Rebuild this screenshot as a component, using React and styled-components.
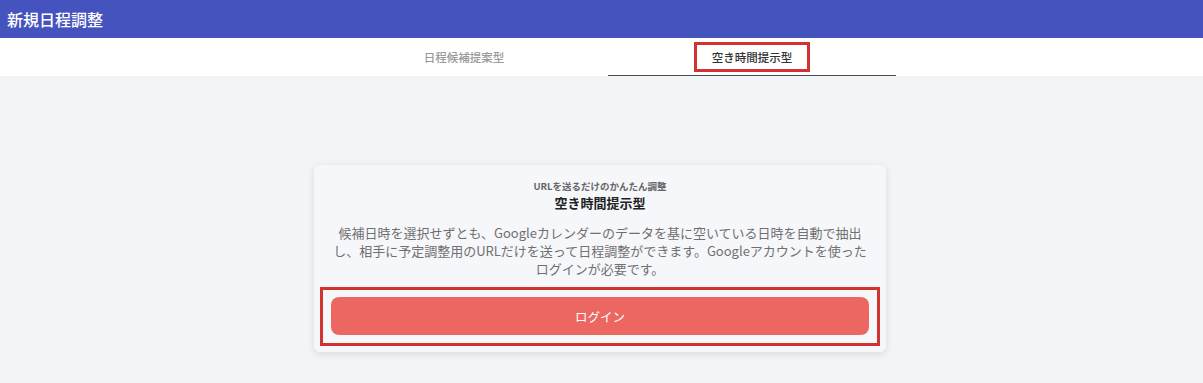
import React from 'react'
import styled, { createGlobalStyle } from 'styled-components'

const GlobalStyle = createGlobalStyle`
  html, body {
    margin: 0;
    padding: 0;
    background: #f3f4f8;
    font-family: "Noto Sans CJK JP", "Noto Sans", sans-serif;
  }
`

const Page = styled.div`
  min-height: 383px;
  background: #f3f4f8;
`

const Header = styled.header`
  height: 38px;
  background: #4553bf;
  display: flex;
  align-items: center;
  padding-left: 7px;
  box-sizing: border-box;
`

const HeaderTitle = styled.h1`
  margin: 0;
  color: #fff;
  font-size: 16px;
  font-weight: 500;
  line-height: 1;
`

const TabBar = styled.nav`
  height: 38px;
  background: #fff;
  display: flex;
  justify-content: center;
  padding-left: 13px;
`

const Tab = styled.div`
  width: 288px;
  display: flex;
  align-items: center;
  justify-content: center;
  box-sizing: border-box;
  border-bottom: 1px solid ${p => (p.$active ? '#4a4a4a' : 'transparent')};
  font-size: 11.5px;
  font-weight: 500;
  color: ${p => (p.$active ? '#333' : '#9a9a9a')};
`

const Marked = styled.span`
  display: inline-flex;
  align-items: center;
  justify-content: center;
  border: 3px solid #d13430;
  padding: ${p => p.$pad || '0'};
`

const Content = styled.main`
  padding-top: 89px;
  display: flex;
  justify-content: center;
  padding-right: 3px;
`

const Card = styled.section`
  width: 572px;
  box-sizing: border-box;
  background: #f6f7fa;
  border-radius: 6px;
  box-shadow: 0 2px 8px rgba(0, 0, 0, 0.1);
  padding: 14px 6px 6px;
  display: flex;
  flex-direction: column;
  align-items: center;
  text-align: center;
`

const Eyebrow = styled.div`
  font-size: 9.5px;
  font-weight: 700;
  color: #666;
  line-height: 14px;
`

const CardTitle = styled.h2`
  margin: 1px 0 0;
  font-size: 13px;
  font-weight: 700;
  color: #222;
  line-height: 18px;
`

const Description = styled.p`
  margin: 12px 0 0;
  max-width: 546px;
  font-size: 13px;
  line-height: 18px;
  color: #707070;
`

const ButtonBox = styled(Marked)`
  display: flex;
  align-self: stretch;
  margin-top: 9px;
  padding: 7px 8px 8px;
`

const Button = styled.button`
  flex: 1;
  height: 38px;
  border: none;
  border-radius: 8px;
  background: #ec6762;
  color: #fff;
  font-family: inherit;
  font-size: 12.5px;
  cursor: pointer;
`

const App = () => {
  return (
    <Page>
      <GlobalStyle />
      <Header>
        <HeaderTitle>新規日程調整</HeaderTitle>
      </Header>
      <TabBar>
        <Tab>日程候補提案型</Tab>
        <Tab $active>
          <Marked $pad="4px 15px">空き時間提示型</Marked>
        </Tab>
      </TabBar>
      <Content>
        <Card>
          <Eyebrow>URLを送るだけのかんたん調整</Eyebrow>
          <CardTitle>空き時間提示型</CardTitle>
          <Description>
            候補日時を選択せずとも、Googleカレンダーのデータを基に空いている日時を自動で抽出し、相手に予定調整用のURLだけを送って日程調整ができます。Googleアカウントを使ったログインが必要です。
          </Description>
          <ButtonBox>
            <Button>ログイン</Button>
          </ButtonBox>
        </Card>
      </Content>
    </Page>
  )
}

export default App
